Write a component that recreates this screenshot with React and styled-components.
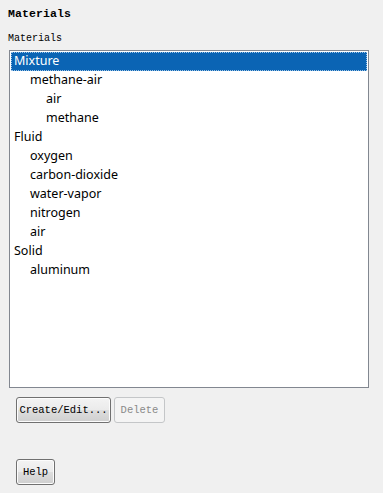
import React from "react";
import styled, { createGlobalStyle } from "styled-components";

const Global = createGlobalStyle`
  html, body { margin: 0; padding: 0; background: #f0f0f0; }
  body { width: 383px; height: 493px; overflow: hidden; }
`;

const Page = styled.div`
  width: 383px;
  height: 493px;
  box-sizing: border-box;
  padding: 6px 0 0 8px;
  display: flex;
  flex-direction: column;
  background: #f0f0f0;
`;

const Title = styled.div`
  font-family: "Liberation Mono", "DejaVu Sans Mono", monospace;
  font-weight: bold;
  font-size: 11.5px;
  line-height: 15px;
  color: #000;
  letter-spacing: 0.1px;
`;

const Label = styled.div`
  font-family: "Liberation Mono", "DejaVu Sans Mono", monospace;
  font-size: 10px;
  line-height: 14px;
  margin-top: 11px;
  color: #000;
`;

const ListBox = styled.div`
  margin-top: 4px;
  margin-left: 1px;
  width: 360px;
  height: 338px;
  box-sizing: border-box;
  border: 1px solid #828790;
  background: #fff;
  padding: 1px;
  display: flex;
  flex-direction: column;
`;

const Row = styled.div`
  height: 19px;
  line-height: 18px;
  box-sizing: border-box;
  padding-left: ${(p) => 3 + p.$level * 16}px;
  font-family: "Noto Sans", "Open Sans", sans-serif;
  font-size: 12.5px;
  color: ${(p) => (p.$selected ? "#fff" : "#000")};
  background: ${(p) => (p.$selected ? "#0b64b4" : "transparent")};
  outline: ${(p) => (p.$selected ? "1px dotted #9cc3e6" : "none")};
  outline-offset: -1px;
  white-space: nowrap;
`;

const Buttons = styled.div`
  display: flex;
  gap: 3px;
  margin-top: 9px;
  margin-left: 8px;
`;

const Button = styled.button`
  height: 26px;
  width: ${(p) => p.$w}px;
  padding: 0;
  box-sizing: border-box;
  border-radius: 3px;
  font-family: "Liberation Mono", "DejaVu Sans Mono", monospace;
  font-size: 10.5px;
  color: ${(p) => (p.disabled ? "#8a8a8a" : "#000")};
  border: 1px solid ${(p) => (p.disabled ? "#c4c6c8" : "#707070")};
  background: ${(p) =>
    p.disabled
      ? "#f4f4f4"
      : "linear-gradient(to bottom, #f3f3f3 0%, #ebebeb 48%, #dddddd 52%, #cfcfcf 100%)"};
  box-shadow: ${(p) => (p.disabled ? "none" : "inset 0 0 0 1px #fcfcfc")};
`;

const HelpWrap = styled.div`
  margin-top: 36px;
  margin-left: 8px;
`;

const items = [
  ["Mixture", 0, true],
  ["methane-air", 1],
  ["air", 2],
  ["methane", 2],
  ["Fluid", 0],
  ["oxygen", 1],
  ["carbon-dioxide", 1],
  ["water-vapor", 1],
  ["nitrogen", 1],
  ["air", 1],
  ["Solid", 0],
  ["aluminum", 1],
];

export default function App() {
  return (
    <>
      <Global />
      <Page>
        <Title>Materials</Title>
        <Label>Materials</Label>
        <ListBox>
          {items.map(([t, l, s], i) => (
            <Row key={i} $level={l} $selected={!!s}>
              {t}
            </Row>
          ))}
        </ListBox>
        <Buttons>
          <Button $w={95}>Create/Edit...</Button>
          <Button $w={51} disabled>
            Delete
          </Button>
        </Buttons>
        <HelpWrap>
          <Button $w={39}>Help</Button>
        </HelpWrap>
      </Page>
    </>
  );
}
